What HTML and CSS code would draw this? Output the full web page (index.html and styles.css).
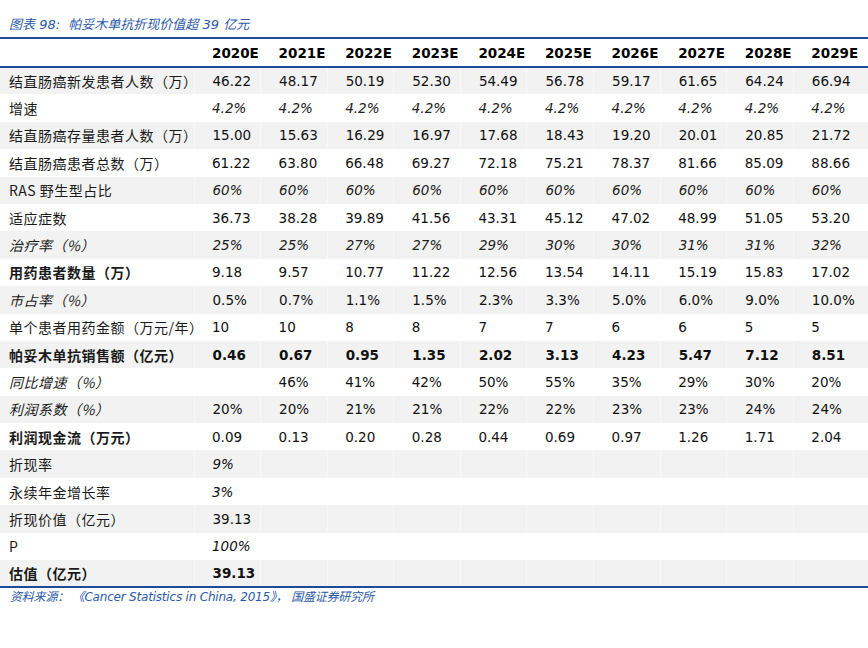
FILE: index.html
```html
<!DOCTYPE html>
<html lang="zh">
<head>
<meta charset="utf-8">
<link rel="stylesheet" href="styles.css">
</head>
<body>
<div class="page">
  <div class="title">图表 98:&nbsp; 帕妥木单抗折现价值超 39 亿元</div>
  <table class="tbl">
    <colgroup>
      <col class="c-label">
      <col class="c-num"><col class="c-num"><col class="c-num"><col class="c-num"><col class="c-num">
      <col class="c-num"><col class="c-num"><col class="c-num"><col class="c-num"><col class="c-last">
    </colgroup>
    <thead>
      <tr><th></th><th>2020E</th><th>2021E</th><th>2022E</th><th>2023E</th><th>2024E</th><th>2025E</th><th>2026E</th><th>2027E</th><th>2028E</th><th>2029E</th></tr>
    </thead>
    <tbody>
      <tr class="g"><td class="lb">结直肠癌新发患者人数（万）</td><td>46.22</td><td>48.17</td><td>50.19</td><td>52.30</td><td>54.49</td><td>56.78</td><td>59.17</td><td>61.65</td><td>64.24</td><td>66.94</td></tr>
      <tr class="it"><td class="lb">增速</td><td>4.2%</td><td>4.2%</td><td>4.2%</td><td>4.2%</td><td>4.2%</td><td>4.2%</td><td>4.2%</td><td>4.2%</td><td>4.2%</td><td>4.2%</td></tr>
      <tr class="g"><td class="lb">结直肠癌存量患者人数（万）</td><td>15.00</td><td>15.63</td><td>16.29</td><td>16.97</td><td>17.68</td><td>18.43</td><td>19.20</td><td>20.01</td><td>20.85</td><td>21.72</td></tr>
      <tr><td class="lb">结直肠癌患者总数（万）</td><td>61.22</td><td>63.80</td><td>66.48</td><td>69.27</td><td>72.18</td><td>75.21</td><td>78.37</td><td>81.66</td><td>85.09</td><td>88.66</td></tr>
      <tr class="g it"><td class="lb">RAS 野生型占比</td><td>60%</td><td>60%</td><td>60%</td><td>60%</td><td>60%</td><td>60%</td><td>60%</td><td>60%</td><td>60%</td><td>60%</td></tr>
      <tr><td class="lb">适应症数</td><td>36.73</td><td>38.28</td><td>39.89</td><td>41.56</td><td>43.31</td><td>45.12</td><td>47.02</td><td>48.99</td><td>51.05</td><td>53.20</td></tr>
      <tr class="g it"><td class="lb ilb">治疗率（%）</td><td>25%</td><td>25%</td><td>27%</td><td>27%</td><td>29%</td><td>30%</td><td>30%</td><td>31%</td><td>31%</td><td>32%</td></tr>
      <tr><td class="lb blb">用药患者数量（万）</td><td>9.18</td><td>9.57</td><td>10.77</td><td>11.22</td><td>12.56</td><td>13.54</td><td>14.11</td><td>15.19</td><td>15.83</td><td>17.02</td></tr>
      <tr class="g"><td class="lb ilb">市占率（%）</td><td>0.5%</td><td>0.7%</td><td>1.1%</td><td>1.5%</td><td>2.3%</td><td>3.3%</td><td>5.0%</td><td>6.0%</td><td>9.0%</td><td>10.0%</td></tr>
      <tr><td class="lb">单个患者用药金额（万元/年）</td><td>10</td><td>10</td><td>8</td><td>8</td><td>7</td><td>7</td><td>6</td><td>6</td><td>5</td><td>5</td></tr>
      <tr class="g b"><td class="lb blb">帕妥木单抗销售额（亿元）</td><td>0.46</td><td>0.67</td><td>0.95</td><td>1.35</td><td>2.02</td><td>3.13</td><td>4.23</td><td>5.47</td><td>7.12</td><td>8.51</td></tr>
      <tr><td class="lb ilb">同比增速（%）</td><td></td><td>46%</td><td>41%</td><td>42%</td><td>50%</td><td>55%</td><td>35%</td><td>29%</td><td>30%</td><td>20%</td></tr>
      <tr class="g"><td class="lb ilb">利润系数（%）</td><td>20%</td><td>20%</td><td>21%</td><td>21%</td><td>22%</td><td>22%</td><td>23%</td><td>23%</td><td>24%</td><td>24%</td></tr>
      <tr><td class="lb blb">利润现金流（万元）</td><td>0.09</td><td>0.13</td><td>0.20</td><td>0.28</td><td>0.44</td><td>0.69</td><td>0.97</td><td>1.26</td><td>1.71</td><td>2.04</td></tr>
      <tr class="g"><td class="lb">折现率</td><td class="i">9%</td><td></td><td></td><td></td><td></td><td></td><td></td><td></td><td></td><td></td></tr>
      <tr><td class="lb">永续年金增长率</td><td class="i">3%</td><td></td><td></td><td></td><td></td><td></td><td></td><td></td><td></td><td></td></tr>
      <tr class="g"><td class="lb">折现价值（亿元）</td><td>39.13</td><td></td><td></td><td></td><td></td><td></td><td></td><td></td><td></td><td></td></tr>
      <tr><td class="lb">P</td><td class="i">100%</td><td></td><td></td><td></td><td></td><td></td><td></td><td></td><td></td><td></td></tr>
      <tr class="g last"><td class="lb blb">估值（亿元）</td><td class="bd">39.13</td><td></td><td></td><td></td><td></td><td></td><td></td><td></td><td></td><td></td></tr>
    </tbody>
  </table>
  <div class="source">资料来源：&nbsp;《Cancer Statistics in China, 2015》，&nbsp;国盛证券研究所</div>
</div>
</body>
</html>
```

FILE: styles.css
```css
html, body {
  margin: 0;
  padding: 0;
  background: #ffffff;
}

.page {
  width: 868px;
  height: 648px;
  font-family: "DejaVu Sans", "Noto Sans CJK SC", sans-serif;
  color: #111111;
}

.title {
  padding: 16px 0 0 9px;
  height: 21px;
  font-size: 13px;
  line-height: 18px;
  font-style: italic;
  color: #2a5aa8;
}

.tbl {
  width: 868px;
  table-layout: fixed;
  border-collapse: collapse;
  border-top: 2px solid #1f4b99;
  border-bottom: 2px solid #1f4b99;
  font-size: 13.5px;
}

.c-label { width: 194px; }
.c-num { width: 66.6px; }
.c-last { width: auto; }

.tbl th {
  height: 27px;
  padding: 0 0 0 18px;
  text-align: left;
  font-weight: bold;
  border-bottom: 2px solid #1f4b99;
  font-size: 13.5px;
  color: #000;
}

.tbl td {
  height: 27.4px;
  padding: 0 0 0 18px;
  white-space: nowrap;
  box-sizing: border-box;
}

.tbl tr.g td {
  background: #f2f2f2;
  border-left: 1px solid #f8f8f8;
}

.tbl tr.g td:first-child {
  border-left: none;
}

.tbl td.lb {
  padding-left: 9px;
  font-family: "Noto Sans CJK SC", "DejaVu Sans", sans-serif;
  font-size: 14px;
  letter-spacing: 0.5px;
  color: #1a1a1a;
}

.tbl td.ilb {
  font-style: italic;
}

.tbl td.blb {
  font-weight: bold;
}

.tbl tr.it td:not(.lb),
.tbl td.i {
  font-style: italic;
}

.tbl tr.b td,
.tbl td.bd {
  font-weight: bold;
}

.tbl tr.it td:not(.lb) {
  color: #222;
}

.source {
  padding: 1px 0 0 10px;
  font-size: 12px;
  line-height: 16px;
  font-style: italic;
  letter-spacing: -0.2px;
  color: #2a5aa8;
}
```
